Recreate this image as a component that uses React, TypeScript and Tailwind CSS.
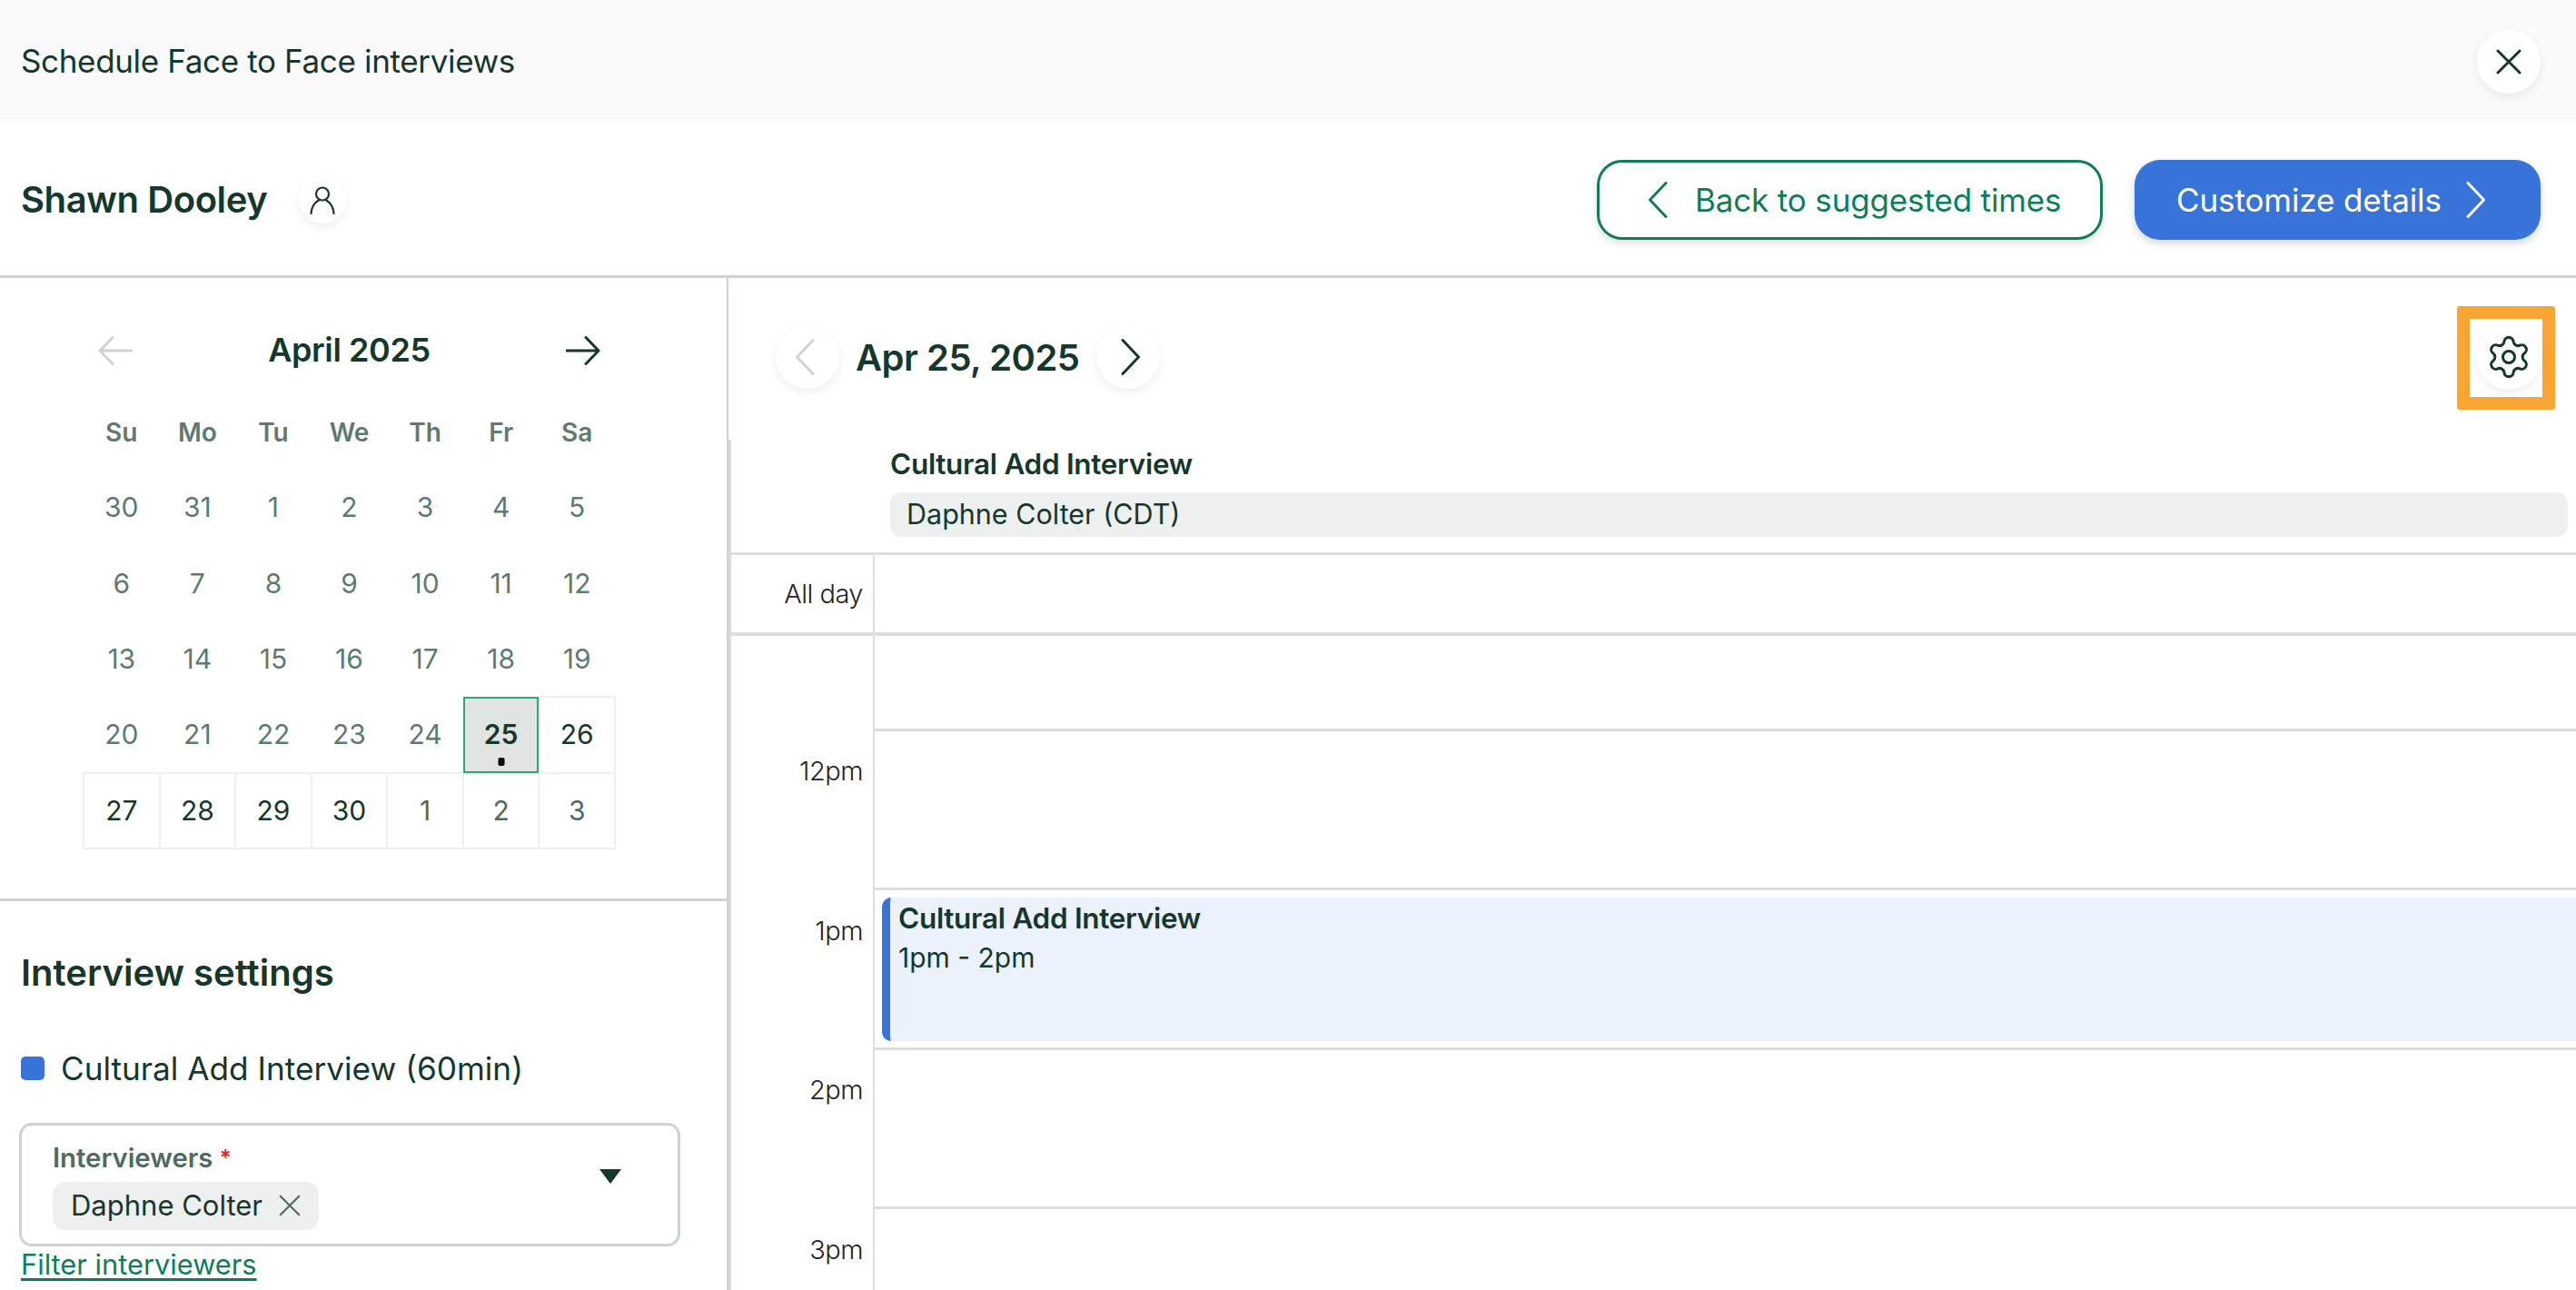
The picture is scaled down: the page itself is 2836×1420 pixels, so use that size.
import { Settings } from "lucide-react";

const ink = "#15372c";

type Day = { label: string; tone: "past" | "current" | "next" | "selected" };

const past = (labels: string[]): Day[] => labels.map((label) => ({ label, tone: "past" }));

const days: Day[] = [
  ...past(["30", "31", "1", "2", "3", "4", "5"]),
  ...past(["6", "7", "8", "9", "10", "11", "12"]),
  ...past(["13", "14", "15", "16", "17", "18", "19"]),
  ...past(["20", "21", "22", "23", "24"]),
  { label: "25", tone: "selected" },
  { label: "26", tone: "current" },
  { label: "27", tone: "current" },
  { label: "28", tone: "current" },
  { label: "29", tone: "current" },
  { label: "30", tone: "current" },
  { label: "1", tone: "next" },
  { label: "2", tone: "next" },
  { label: "3", tone: "next" },
];

function Chevron({ dir, color, className = "" }: { dir: "left" | "right"; color: string; className?: string }) {
  return (
    <svg width="22" height="40" viewBox="0 0 22 40" fill="none" className={className}>
      <path
        d={dir === "left" ? "M20 1.5 L2.5 20 L20 38.5" : "M2 1.5 L19.5 20 L2 38.5"}
        stroke={color}
        strokeWidth="3"
        strokeLinecap="round"
        strokeLinejoin="round"
      />
    </svg>
  );
}

function Arrow({ dir, color }: { dir: "left" | "right"; color: string }) {
  return (
    <svg width="38" height="32" viewBox="0 0 38 32" fill="none">
      <path
        d={dir === "left" ? "M16 1.5 L2 16 L16 30.5 M2 16 H37" : "M22 1.5 L36 16 L22 30.5 M36 16 H1"}
        stroke={color}
        strokeWidth="3"
        strokeLinecap="round"
        strokeLinejoin="round"
      />
    </svg>
  );
}

function Close({ size, width, color }: { size: number; width: number; color: string }) {
  return (
    <svg width={size} height={size} viewBox="0 0 28 28" fill="none">
      <path d="M2 2 L26 26 M26 2 L2 26" stroke={color} strokeWidth={width} strokeLinecap="round" />
    </svg>
  );
}

function Person() {
  return (
    <svg width="28" height="31" viewBox="0 0 28 31" fill="none">
      <circle cx="14" cy="8.5" r="7" stroke={ink} strokeWidth="2.2" />
      <path d="M1.5 30 C2 22.5 6 17.5 10.5 15 M26.5 30 C26 22.5 22 17.5 17.5 15" stroke={ink} strokeWidth="2.2" strokeLinecap="round" />
    </svg>
  );
}

function RoundButton({ children, size = "h-[70px] w-[70px]" }: { children: React.ReactNode; size?: string }) {
  return (
    <button
      type="button"
      className={`flex ${size} shrink-0 items-center justify-center rounded-full bg-white shadow-[0_4px_10px_rgba(21,55,44,0.08)]`}
    >
      {children}
    </button>
  );
}

function DayCell({ day }: { day: Day }) {
  if (day.tone === "selected") {
    return (
      <div className="relative z-10 flex h-[83.4px] items-center justify-center border-2 border-[#2da67f] bg-[#e0e4e2] text-[30px] font-semibold text-[#15372c]">
        {day.label}
        <span className="absolute bottom-[6px] left-1/2 h-[9px] w-[7px] -translate-x-1/2 rounded-[2px] bg-black" />
      </div>
    );
  }
  if (day.tone === "past") {
    return <div className="flex h-[83.4px] items-center justify-center text-[30px] text-[#607a70]">{day.label}</div>;
  }
  return (
    <div
      className={`flex h-[83.4px] items-center justify-center text-[30px] outline-2 -outline-offset-1 outline-[#eff0f0] ${
        day.tone === "current" ? "text-[#15372c]" : "text-[#4f6a60]"
      }`}
    >
      {day.label}
    </div>
  );
}

function HourRow({ label, children }: { label: string; children?: React.ReactNode }) {
  return (
    <div className="flex h-[175.6px] shrink-0">
      <div className="w-[156px] pr-[11px] pt-[27.5px] text-right text-[29px] font-light leading-[40px] tracking-[-0.5px] text-[#222]">
        {label}
      </div>
      <div className="flex-1 border-t-[3px] border-l-2 border-[#dcdedd]">{children}</div>
    </div>
  );
}

export default function App() {
  return (
    <div className="flex h-[1420px] w-[2836px] flex-col overflow-hidden bg-white font-['Inter',sans-serif] text-[#15372c]">
      <header className="flex h-[135px] shrink-0 items-center justify-between bg-[#fafafa] pl-[23px] pr-[39px]">
        <h1 className="text-[35px] font-normal tracking-[-0.35px]">Schedule Face to Face interviews</h1>
        <RoundButton>
          <Close size={28} width={3} color={ink} />
        </RoundButton>
      </header>

      <div className="flex h-[171px] shrink-0 items-center justify-between border-b-[3px] border-[#ccd3d1] pl-[23px] pr-[39px] pt-[2px]">
        <div className="flex items-center gap-[35px]">
          <h2 className="text-[40px] font-semibold tracking-[-0.4px]">Shawn Dooley</h2>
          <RoundButton size="h-[52px] w-[52px]">
            <Person />
          </RoundButton>
        </div>
        <div className="flex items-center gap-[35px]">
          <button
            type="button"
            className="flex h-[88px] w-[557px] items-center gap-[30px] rounded-[28px] border-[3px] border-[#0f7d5a] bg-white pl-[53px] text-[35px] tracking-[-0.15px] text-[#0f7d5a] shadow-[0_4px_8px_rgba(21,55,44,0.15)]"
          >
            <Chevron dir="left" color="#0f7d5a" />
            Back to suggested times
          </button>
          <button
            type="button"
            className="flex h-[88px] w-[447px] items-center gap-[27px] rounded-[28px] bg-[#3873d9] pl-[46px] text-[35px] tracking-[-0.1px] text-white shadow-[0_4px_8px_rgba(21,55,44,0.2)]"
          >
            Customize details
            <Chevron dir="right" color="#ffffff" />
          </button>
        </div>
      </div>

      <div className="flex min-h-0 flex-1">
        <aside className="w-[802px] shrink-0 border-r-2 border-[#ccd3d1]">
          <div className="pl-[92px] pt-[60px]">
            <div className="w-[585px]">
              <div className="flex h-[40px] items-center justify-between px-[16px]">
                <Arrow dir="left" color="#ccd5d2" />
                <span className="-translate-y-[1px] text-[36px] font-semibold tracking-[-0.4px]">April 2025</span>
                <Arrow dir="right" color={ink} />
              </div>
              <div className="mt-[29px] grid grid-cols-7">
                {["Su", "Mo", "Tu", "We", "Th", "Fr", "Sa"].map((d) => (
                  <div key={d} className="flex h-[82px] items-center justify-center text-[28px] font-semibold text-[#607a70]">
                    {d}
                  </div>
                ))}
                {days.map((day, i) => (
                  <DayCell key={i} day={day} />
                ))}
              </div>
            </div>
          </div>

          <div className="mt-[55px] border-t-[3px] border-[#ccd3d1] pl-[23px] pr-[51px] pt-[56px]">
            <h3 className="text-[40px] font-semibold leading-[46px]">Interview settings</h3>
            <div className="mt-[62px] flex h-[40px] items-center gap-[18px]">
              <span className="h-[26px] w-[26px] rounded-[5px] bg-[#3873d9]" />
              <span className="text-[35.2px]">Cultural Add Interview (60min)</span>
            </div>
            <div className="relative -ml-[2px] mt-[40px] h-[136px] rounded-[14px] border-[3px] border-[#ccd3d1] pl-[34px] pt-[18px]">
              <div className="text-[29.3px] font-semibold leading-[36px] text-[#4f6a60]">
                Interviewers <span className="align-top text-[24px] text-[#d92d20]">*</span>
              </div>
              <div className="mt-[8px] inline-flex h-[53px] items-center gap-[18px] rounded-[14px] bg-[#eef0ef] pl-[20px] pr-[20px] text-[31px]">
                Daphne Colter
                <Close size={24} width={2.5} color="#4f6a60" />
              </div>
              <svg width="24" height="16" viewBox="0 0 24 16" className="absolute right-[62px] top-[48px]">
                <path d="M0 0 H24 L12 16 Z" fill={ink} />
              </svg>
            </div>
            <a className="mt-[1px] block text-[30.8px] leading-[38px] text-[#0f7d5a] underline underline-offset-4">Filter interviewers</a>
          </div>
        </aside>

        <main className="flex min-w-0 flex-1 flex-col">
          <div className="flex h-[178px] shrink-0 items-start justify-between pl-[52px] pr-[23px]">
            <div className="mt-[52px] flex items-center gap-[18px]">
              <RoundButton>
                <Chevron dir="left" color="#ccd5d2" className="-translate-x-[3px]" />
              </RoundButton>
              <span className="translate-y-[1px] text-[40px] font-semibold tracking-[-0.5px]">Apr 25, 2025</span>
              <RoundButton>
                <Chevron dir="right" color={ink} className="translate-x-[3px]" />
              </RoundButton>
            </div>
            <div className="mt-[31px] flex h-[114px] w-[108px] items-center justify-end rounded-[3px] border-[14px] border-[#f9a533] pr-[2px]">
              <RoundButton>
                <Settings size={52} strokeWidth={1.4} color={ink} className="-translate-y-[1px]" />
              </RoundButton>
            </div>
          </div>

          <div className="flex min-h-0 flex-1 flex-col border-l-[3px] border-[#d9dbdb]">
            <div className="h-[124px] shrink-0 pl-[175px] pr-[9px] pt-[9px]">
              <div className="text-[31.5px] font-semibold leading-[36px] tracking-[-0.3px]">Cultural Add Interview</div>
              <div className="mt-[13px] flex h-[49px] items-center rounded-[12px] bg-[#eef0ef] pb-[2px] pl-[18px] text-[30.5px]">
                Daphne Colter (CDT)
              </div>
            </div>
            <div className="flex h-[92px] shrink-0 border-t-[3px] border-b-4 border-[#dcdedd]">
              <div className="flex w-[156px] items-center justify-end pr-[11px] text-[29px] font-light tracking-[-0.5px] text-[#222]">
                All day
              </div>
              <div className="flex-1 border-l-2 border-[#dcdedd]" />
            </div>
            <div className="flex h-[101.5px] shrink-0">
              <div className="w-[156px]" />
              <div className="flex-1 border-l-2 border-[#dcdedd]" />
            </div>
            <HourRow label="12pm" />
            <HourRow label="1pm">
              <div className="ml-[8px] mt-[7.5px] h-[158px] rounded-l-[10px] border-l-[9px] border-[#3873d9] bg-[#ebf1fd] pl-[9px] pt-[5px] text-[30px] leading-[36px]">
                <div className="text-[31.5px] font-semibold tracking-[-0.3px]">Cultural Add Interview</div>
                <div className="mt-[7px]">1pm - 2pm</div>
              </div>
            </HourRow>
            <HourRow label="2pm" />
            <HourRow label="3pm" />
          </div>
        </main>
      </div>
    </div>
  );
}
